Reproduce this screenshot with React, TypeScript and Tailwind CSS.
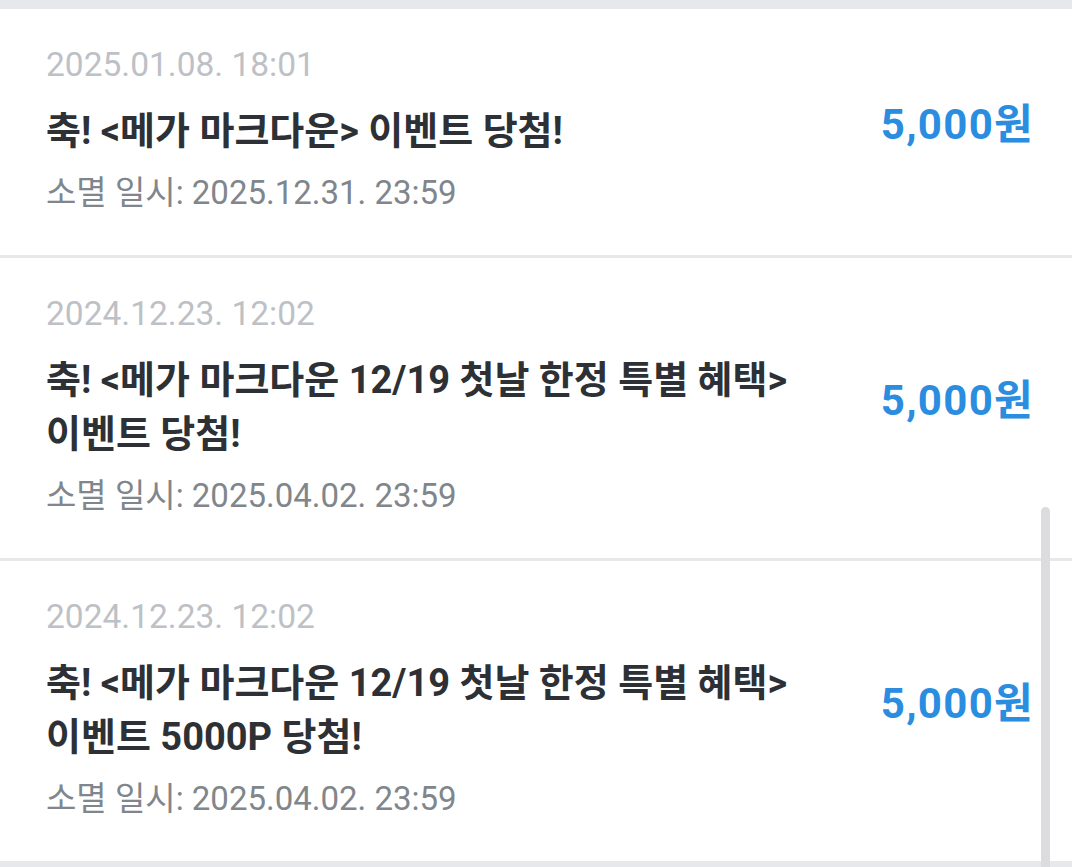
const FONT = "font-['Roboto','Noto_Sans_CJK_KR',sans-serif]"

type Reward = {
    id: number
    issuedAt: string
    title: string
    expiresAt: string
    amount: string
}

const rewards: Reward[] = [
    {
        id: 1,
        issuedAt: '2025.01.08. 18:01',
        title: '축! <메가 마크다운> 이벤트 당첨!',
        expiresAt: '2025.12.31. 23:59',
        amount: '5,000원',
    },
    {
        id: 2,
        issuedAt: '2024.12.23. 12:02',
        title: '축! <메가 마크다운 12/19 첫날 한정 특별 혜택> 이벤트 당첨!',
        expiresAt: '2025.04.02. 23:59',
        amount: '5,000원',
    },
    {
        id: 3,
        issuedAt: '2024.12.23. 12:02',
        title: '축! <메가 마크다운 12/19 첫날 한정 특별 혜택> 이벤트 5000P 당첨!',
        expiresAt: '2025.04.02. 23:59',
        amount: '5,000원',
    },
]

function RewardRow({ reward }: { reward: Reward }) {
    return (
        <div className="flex items-center bg-white pl-[46px] pr-[38px] pt-[34px] pb-[40px]">
            <div className="min-w-0 flex-1 pr-[40px]">
                <p className="text-[33.5px] leading-[44px] text-[#bdc1c6]">{reward.issuedAt}</p>
                <p className="mt-[17px] break-keep text-[38px] font-bold leading-[54px] text-[#2d3135]">
                    {reward.title}
                </p>
                <p className="mt-[13px] text-[33px] leading-[44px] text-[#80868b]">
                    소멸 일시: {reward.expiresAt}
                </p>
            </div>
            <p className="mb-[8px] shrink-0 text-[42px] font-bold leading-[54px] tracking-[1.3px] text-[#2a8de0]">
                {reward.amount}
            </p>
        </div>
    )
}

export default function App() {
    return (
        <div className={`relative h-[867px] w-[1072px] overflow-hidden bg-[#e7e8eb] ${FONT}`}>
            <div className="flex flex-col gap-[3px] pt-[9px]">
                {rewards.map((reward) => (
                    <RewardRow key={reward.id} reward={reward} />
                ))}
            </div>
            {/* scroll thumb */}
            <div className="absolute left-[1041px] top-[507px] h-[400px] w-[9px] rounded-full bg-[#dcdcdf]" />
        </div>
    )
}
